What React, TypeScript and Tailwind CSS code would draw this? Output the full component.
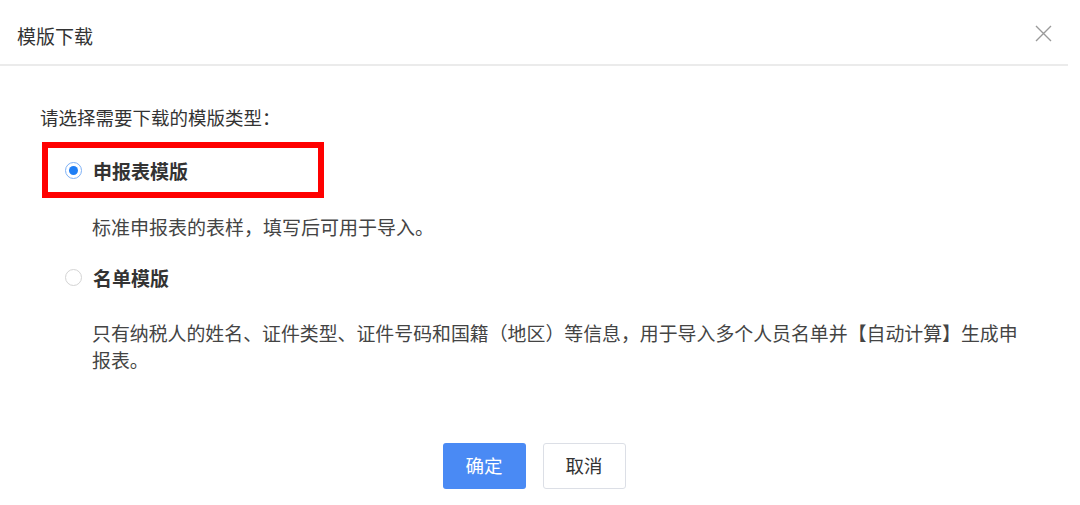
import React from 'react';

const font = { fontFamily: '"Microsoft YaHei", "Noto Sans CJK SC", sans-serif' };

const Radio: React.FC<{ checked?: boolean }> = ({ checked }) => (
  <span
    className={
      'flex h-[17px] w-[17px] shrink-0 items-center justify-center rounded-full bg-white border-[1.5px] ' +
      (checked ? 'border-[#7eb1f6]' : 'border-[#d4d4d4]')
    }
  >
    {checked && <span className="h-[9px] w-[9px] rounded-full bg-[#1e7ef5]" />}
  </span>
);

const App: React.FC = () => {
  return (
    <div className="h-[505px] w-[1080px] overflow-hidden bg-white text-[#333]" style={font}>
      <div className="w-[1068px]">
        {/* header */}
        <div className="flex h-[66px] items-center justify-between border-b-2 border-[#ebebeb] pl-[17px] pr-[16px] pt-[6px]">
          <span className="text-[19px] leading-[27px] text-[#333]">模版下载</span>
          <svg width="17" height="17" viewBox="0 0 17 17" className="mt-[-4px]">
            <path d="M1 1 L16 16 M16 1 L1 16" stroke="#9a9a9a" strokeWidth="1.4" fill="none" />
          </svg>
        </div>

        {/* body */}
        <div className="pl-[40px] pt-[38px]">
          <p className="text-[18.5px] leading-[27px] text-[#333]">请选择需要下载的模版类型：</p>

          <div className="ml-[2px] mt-[11px] flex h-[56px] w-[282px] items-center gap-[11px] border-[6px] border-[#ff0000] pl-[17px]">
            <Radio checked />
            <span className="text-[19px] font-bold leading-[27px] text-[#333]">申报表模版</span>
          </div>

          <p className="ml-[52px] mt-[15px] text-[19px] leading-[27px] text-[#444]">
            标准申报表的表样，填写后可用于导入。
          </p>

          <div className="ml-[25px] mt-[24px] flex items-center gap-[11px]">
            <Radio />
            <span className="text-[19px] font-bold leading-[27px] text-[#333]">名单模版</span>
          </div>

          <p className="ml-[52px] mt-[28px] w-[935px] text-[18.9px] leading-[27px] text-[#444]">
            只有纳税人的姓名、证件类型、证件号码和国籍（地区）等信息，用于导入多个人员名单并【自动计算】生成申报表。
          </p>
        </div>

        {/* footer */}
        <div className="mt-[70px] flex justify-center gap-[17px]">
          <button className="h-[46px] w-[83px] rounded-[3px] bg-[#4a8af4] text-[18.5px] text-white">确定</button>
          <button className="h-[46px] w-[83px] rounded-[3px] border border-[#dcdfe6] bg-white text-[18.5px] text-[#333]">
            取消
          </button>
        </div>
      </div>
    </div>
  );
};

export default App;
